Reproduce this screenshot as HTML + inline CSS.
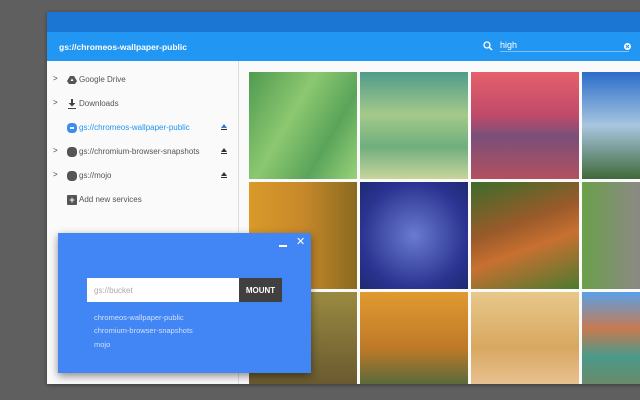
<!DOCTYPE html>
<html><head><style>
*{margin:0;padding:0;box-sizing:border-box}
body{width:640px;height:400px;background:#5f5f5f;font-family:"Liberation Sans",sans-serif;position:relative;overflow:hidden}
.win{position:absolute;left:47px;top:12px;width:600px;height:372px;background:#fafafa;box-shadow:0 1px 4px rgba(0,0,0,.4)}
.top{height:20px;background:#1a76d2}
.hdr{height:29px;background:#2196f3;color:#fff;font-size:8.5px;font-weight:bold;padding:10px 0 0 12px;position:relative}
.side{position:absolute;left:0;top:49px;width:192px;bottom:0;background:#fafafa;border-right:1px solid #ddd}
.it{position:absolute;left:0;height:20px;font-size:8px;color:#555;width:192px}
.it .ch{position:absolute;left:6px;top:4px;font-size:8px;color:#444}
.it .ic{position:absolute;left:20px;top:5px;width:10px;height:10px}
.it .tx{position:absolute;left:32px;top:5px}
.ej{position:absolute;left:174px;top:6px;width:0;height:0;border-left:3px solid transparent;border-right:3px solid transparent;border-bottom:4px solid #333}
.ej:after{content:"";position:absolute;left:-3px;top:5px;width:6px;height:1px;background:#333}
.hex{background:#555;border-radius:4px}
.tile{position:absolute;width:108px;height:107px}
.dlg{position:absolute;left:58px;top:233px;width:253px;height:140px;background:#4285f4;box-shadow:0 3px 8px rgba(0,0,0,.45)}
</style></head><body>
<div class="win">
<div class="top"></div>
<div class="hdr">gs://chromeos-wallpaper-public
<svg style="position:absolute;left:436px;top:9px" width="10" height="10"><circle cx="4" cy="4" r="3" stroke="#fff" stroke-width="1.3" fill="none"/><line x1="6" y1="6" x2="9" y2="9" stroke="#fff" stroke-width="1.5"/></svg>
<div style="position:absolute;left:453px;top:8px;width:129px;height:12px;border-bottom:1px solid #7fc0f7;font-weight:normal;font-size:9px">high</div>
<svg style="position:absolute;left:577px;top:11px" width="7" height="7"><circle cx="3.5" cy="3.5" r="3.5" fill="#fff"/><path d="M2 2L5 5M5 2L2 5" stroke="#2196f3" stroke-width="1"/></svg>
</div>
<div class="side">
<div class="it" style="top:9px"><span class="ch">&gt;</span><svg class="ic" viewBox="0 0 10 10"><path d="M3 1h4l3 5-2 3H2L0 6z" fill="#555"/><path d="M3.5 6h3L5 3.5z" fill="#fafafa"/></svg><span class="tx">Google Drive</span></div>
<div class="it" style="top:33px"><span class="ch">&gt;</span><svg class="ic" viewBox="0 0 10 10"><path d="M4 0h2v4h2.5L5 7.5 1.5 4H4z M1 9h8v1H1z" fill="#444"/></svg><span class="tx">Downloads</span></div>
<div class="it" style="top:57px;color:#2196f3"><div class="ic hex" style="background:#3b8ef0"></div><div style="position:absolute;left:23px;top:9px;width:4px;height:2px;background:#fff"></div><span class="tx">gs://chromeos-wallpaper-public</span><div class="ej" style="border-bottom-color:#2a7fd4"></div></div>
<div class="it" style="top:81px"><span class="ch">&gt;</span><div class="ic hex"></div><span class="tx">gs://chromium-browser-snapshots</span><div class="ej"></div></div>
<div class="it" style="top:105px"><span class="ch">&gt;</span><div class="ic hex"></div><span class="tx">gs://mojo</span><div class="ej"></div></div>
<div class="it" style="top:129px"><div class="ic" style="background:#555;border-radius:1px;color:#fff;font-size:9px;line-height:10px;text-align:center;font-weight:bold">+</div><span class="tx">Add new services</span></div>
</div>
</div>
<div class="tile" style="left:249px;top:72px;background:linear-gradient(120deg,#4f9a50,#8cc870 40%,#5aa45a 70%,#9ad27a)"></div>
<div class="tile" style="left:360px;top:72px;background:linear-gradient(180deg,#4f9c8a,#a4c98a 40%,#6fae7e 70%,#c7d59a)"></div>
<div class="tile" style="left:471px;top:72px;background:linear-gradient(180deg,#e5606a,#c14a6a 40%,#7a4f78 60%,#b35060)"></div>
<div class="tile" style="left:582px;top:72px;background:linear-gradient(180deg,#2a6cc9,#a8c6e0 50%,#3f6a3a)"></div>
<div class="tile" style="left:249px;top:182px;background:linear-gradient(90deg,#d99a2a,#c7882a 50%,#8a6a20)"></div>
<div class="tile" style="left:360px;top:182px;background:radial-gradient(circle,#6a7bd0,#2a3390 70%,#1e2a70)"></div>
<div class="tile" style="left:471px;top:182px;background:linear-gradient(160deg,#3c6d2a,#9a5a2a 40%,#c87030 60%,#4c7a30)"></div>
<div class="tile" style="left:582px;top:182px;background:linear-gradient(90deg,#6aa04a,#8a8a82 50%,#5a8040)"></div>
<div class="tile" style="left:249px;top:292px;height:92px;background:linear-gradient(180deg,#9a8a40,#6a5a30)"></div>
<div class="tile" style="left:360px;top:292px;height:92px;background:linear-gradient(180deg,#e09a30,#c07a28 60%,#5a6a3a)"></div>
<div class="tile" style="left:471px;top:292px;height:92px;background:linear-gradient(180deg,#e8c88a,#d8a860 60%,#e8c090)"></div>
<div class="tile" style="left:582px;top:292px;height:92px;background:linear-gradient(180deg,#5aa0e8,#c87a50 40%,#4a9a8a 70%,#6a8a6a)"></div>
<div class="dlg">
<div style="position:absolute;left:221px;top:12px;width:8px;height:1.5px;background:#fff"></div>
<div style="position:absolute;left:238px;top:2px;color:#fff;font-size:11px">✕</div>
<div style="position:absolute;left:29px;top:45px;width:152px;height:24px;background:#fff;color:#aaa;font-size:8px;padding:8px 0 0 7px">gs://bucket</div>
<div style="position:absolute;left:181px;top:45px;width:43px;height:24px;background:#404040;color:#fff;font-size:8px;font-weight:bold;text-align:center;padding-top:8px">MOUNT</div>
<div style="position:absolute;left:36px;top:78px;color:#cfe0fb;font-size:7.5px;line-height:13.3px">chromeos-wallpaper-public<br>chromium-browser-snapshots<br>mojo</div>
</div>
</body></html>
